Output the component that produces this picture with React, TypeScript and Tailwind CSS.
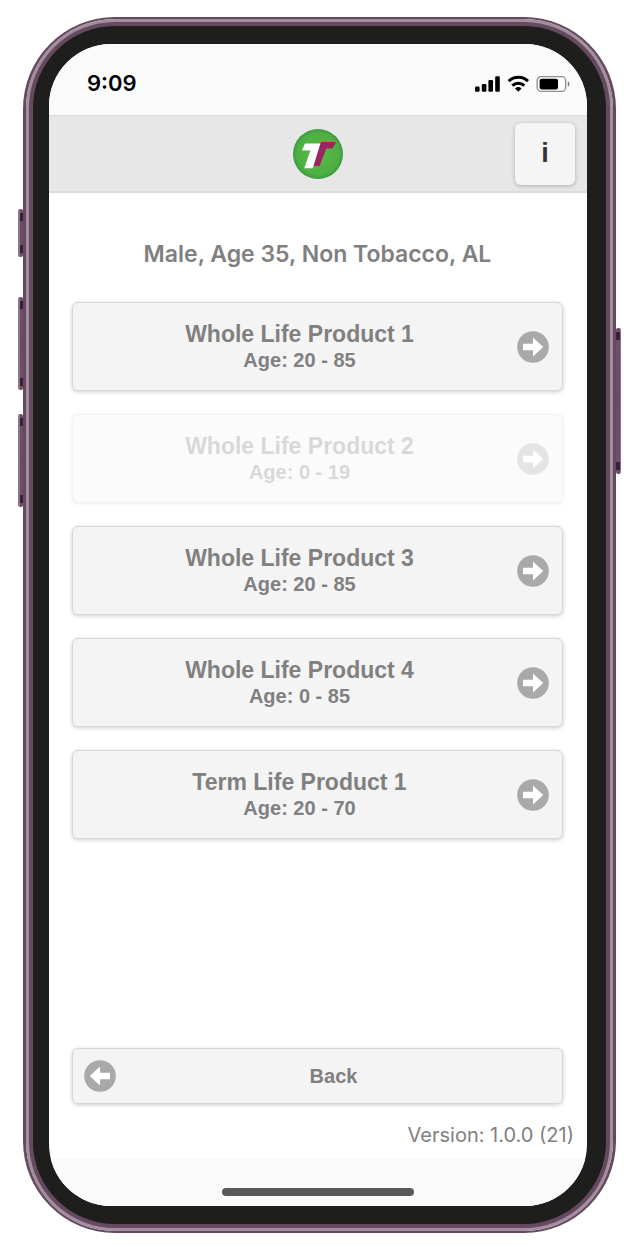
import React from "react";
import clsx from "clsx";

type Product = {
    name: string;
    ages: string;
    disabled?: boolean;
};

const products: Product[] = [
    { name: "Whole Life Product 1", ages: "20 - 85" },
    { name: "Whole Life Product 2", ages: "0 - 19", disabled: true },
    { name: "Whole Life Product 3", ages: "20 - 85" },
    { name: "Whole Life Product 4", ages: "0 - 85" },
    { name: "Term Life Product 1", ages: "20 - 70" },
];

function ArrowIcon({ left = false }: { left?: boolean }) {
    return (
        <svg viewBox="0 0 32 32" className={clsx("size-8 shrink-0", left && "rotate-180")} aria-hidden="true">
            <circle cx="16" cy="16" r="15.8" fill="#a9a9a9" />
            <path d="M6 12.8h10V6.4l10.2 9.6L16 25.6v-6.4H6z" fill="#fff" />
        </svg>
    );
}

function Logo() {
    return (
        <svg viewBox="0 0 50 50" className="size-[50px]" role="img" aria-label="Logo">
            <defs>
                <radialGradient id="logo-fill">
                    <stop offset="0" stopColor="#5cbd48" />
                    <stop offset="0.85" stopColor="#4dae43" />
                    <stop offset="1" stopColor="#3a9a3e" />
                </radialGradient>
            </defs>
            <circle cx="25" cy="25" r="25" fill="url(#logo-fill)" />
            <path d="M12 14.6h15.6L19.8 39.2h-8.6L17.4 21.4H8.8z" fill="#fff" />
            <path d="M28 13h15l-3.4 6.4h-6.2L26.6 37h-6z" fill="#9d2461" />
        </svg>
    );
}

function StatusIcons() {
    return (
        <svg viewBox="0 0 96 18" className="h-[18px] w-24" aria-hidden="true">
            <rect x="0" y="11.5" width="4.6" height="5.2" rx="1.2" />
            <rect x="6.8" y="9" width="4.6" height="7.7" rx="1.2" />
            <rect x="13.4" y="5" width="4.6" height="11.7" rx="1.2" />
            <rect x="20.2" y="1.3" width="4.6" height="15.4" rx="1.2" />
            <g fill="none" stroke="#000" strokeWidth="3">
                <path d="M33.6 6.2a14 14 0 0 1 19.4 0" />
                <path d="M37.3 10.6a8.7 8.7 0 0 1 12 0" />
            </g>
            <path d="M40 13.4a5 5 0 0 1 6.6 0l-3.3 3.4z" />
            <rect x="62.2" y="1.6" width="28.4" height="14.8" rx="4" fill="#fff" stroke="#909090" strokeWidth="1.4" />
            <rect x="64.6" y="3.8" width="18.4" height="10.6" rx="1.8" />
            <path d="M92.8 6.4c2.1.6 2.1 4.6 0 5.2z" fill="#777" />
        </svg>
    );
}

function ProductButton({ name, ages, disabled }: Product) {
    return (
        <button
            type="button"
            disabled={disabled}
            className="flex w-full items-center rounded-md border border-[#d8d8d8] bg-[#f4f4f4] py-[17px] pr-[13px] pl-[9px] font-bold text-[#808080] shadow-[0_1px_4px_rgba(0,0,0,0.2)] disabled:opacity-30"
        >
            <span className="flex-1">
                <span className="block text-[23px] leading-7">{name}</span>
                <span className="block text-[20px] leading-[25px]">Age: {ages}</span>
            </span>
            <ArrowIcon />
        </button>
    );
}

const sideKey = "absolute w-[5px] rounded-xs border-[#8d7587] bg-linear-to-b from-[#6f5069] via-[#6b4a66] to-[#6f5069] from-0% to-100%";
const keyEnd = "absolute inset-x-0 h-2 bg-[#37213a]";

function SideKey({ className }: { className: string }) {
    return (
        <div className={clsx(sideKey, className)}>
            <div className={clsx(keyEnd, "top-1")} />
            <div className={clsx(keyEnd, "bottom-1")} />
        </div>
    );
}

export default function App() {
    return (
        <div className="flex min-h-screen flex-col bg-white pt-[17px] pr-[26px] pb-[14px] pl-[23px]">
            {/* Metal band and bezel */}
            <div className="relative flex flex-1 flex-col rounded-[92px] border-3 border-t-2 border-b-2 border-[#65495f]">
                <SideKey className="top-[190px] -left-2 h-12 border-l-2" />
                <SideKey className="top-[278px] -left-2 h-[93px] border-l-2" />
                <SideKey className="top-[395px] -left-2 h-[93px] border-l-2" />
                <SideKey className="top-[309px] -right-2 h-[146px] border-r" />

                <div className="flex flex-1 flex-col rounded-[89px] border-3 border-[#a18f9d] bg-[#65495f] p-1">
                    <div className="flex flex-1 flex-col rounded-[82px] border-[18px] border-r-[19px] border-l-[16px] border-[#1e1e1c] bg-[#1e1e1c]">
                        <div className="flex flex-1 flex-col overflow-hidden rounded-[62px] bg-white">
                            <div className="flex h-[71px] items-center justify-between bg-[#fafafa] pt-2 pr-4 pl-[38px]">
                                <span className="font-[Inter,sans-serif] text-[22px] font-semibold text-black">9:09</span>
                                <StatusIcons />
                            </div>

                            <header className="grid h-[78px] grid-cols-[1fr_auto_1fr] items-center border-t border-b-2 border-[#dcdcdc] bg-[#e7e7e7] px-3">
                                <div className="col-start-2">
                                    <Logo />
                                </div>
                                <button
                                    type="button"
                                    className="h-[62px] w-[60px] justify-self-end rounded-md bg-[#f5f5f5] font-['Liberation_Sans',sans-serif] text-[27px] font-bold text-[#333] shadow-[0_1px_4px_rgba(0,0,0,0.25)]"
                                >
                                    i
                                </button>
                            </header>

                            <main className="flex flex-1 flex-col pr-6 pl-[23px] font-['Liberation_Sans',sans-serif]">
                                <h1 className="pt-[45px] text-center font-[Inter,sans-serif] text-[23px] leading-8 font-semibold text-[#808080]">
                                    Male, Age 35, Non Tobacco, AL
                                </h1>

                                <div className="mt-8 flex flex-col gap-[23px]">
                                    {products.map((product) => (
                                        <ProductButton key={product.name} {...product} />
                                    ))}
                                </div>

                                <button
                                    type="button"
                                    className="mt-auto flex items-center rounded-md border border-[#d8d8d8] bg-[#f4f4f4] p-[11px] text-[20px] font-bold text-[#808080] shadow-[0_1px_4px_rgba(0,0,0,0.2)]"
                                >
                                    <ArrowIcon left />
                                    <span className="flex-1">Back</span>
                                </button>
                            </main>

                            <footer>
                                <p className="pt-4 pr-[13px] pb-2 text-right font-[Inter,sans-serif] text-[20px] leading-[30px] text-[#808080]">
                                    Version: 1.0.0 (21)
                                </p>
                                <div className="flex h-12 items-end justify-center bg-[#fafafa] pb-[10px]">
                                    <div className="h-2 w-48 rounded-full bg-[#5a5a5a]" />
                                </div>
                            </footer>
                        </div>
                    </div>
                </div>
            </div>
        </div>
    );
}
